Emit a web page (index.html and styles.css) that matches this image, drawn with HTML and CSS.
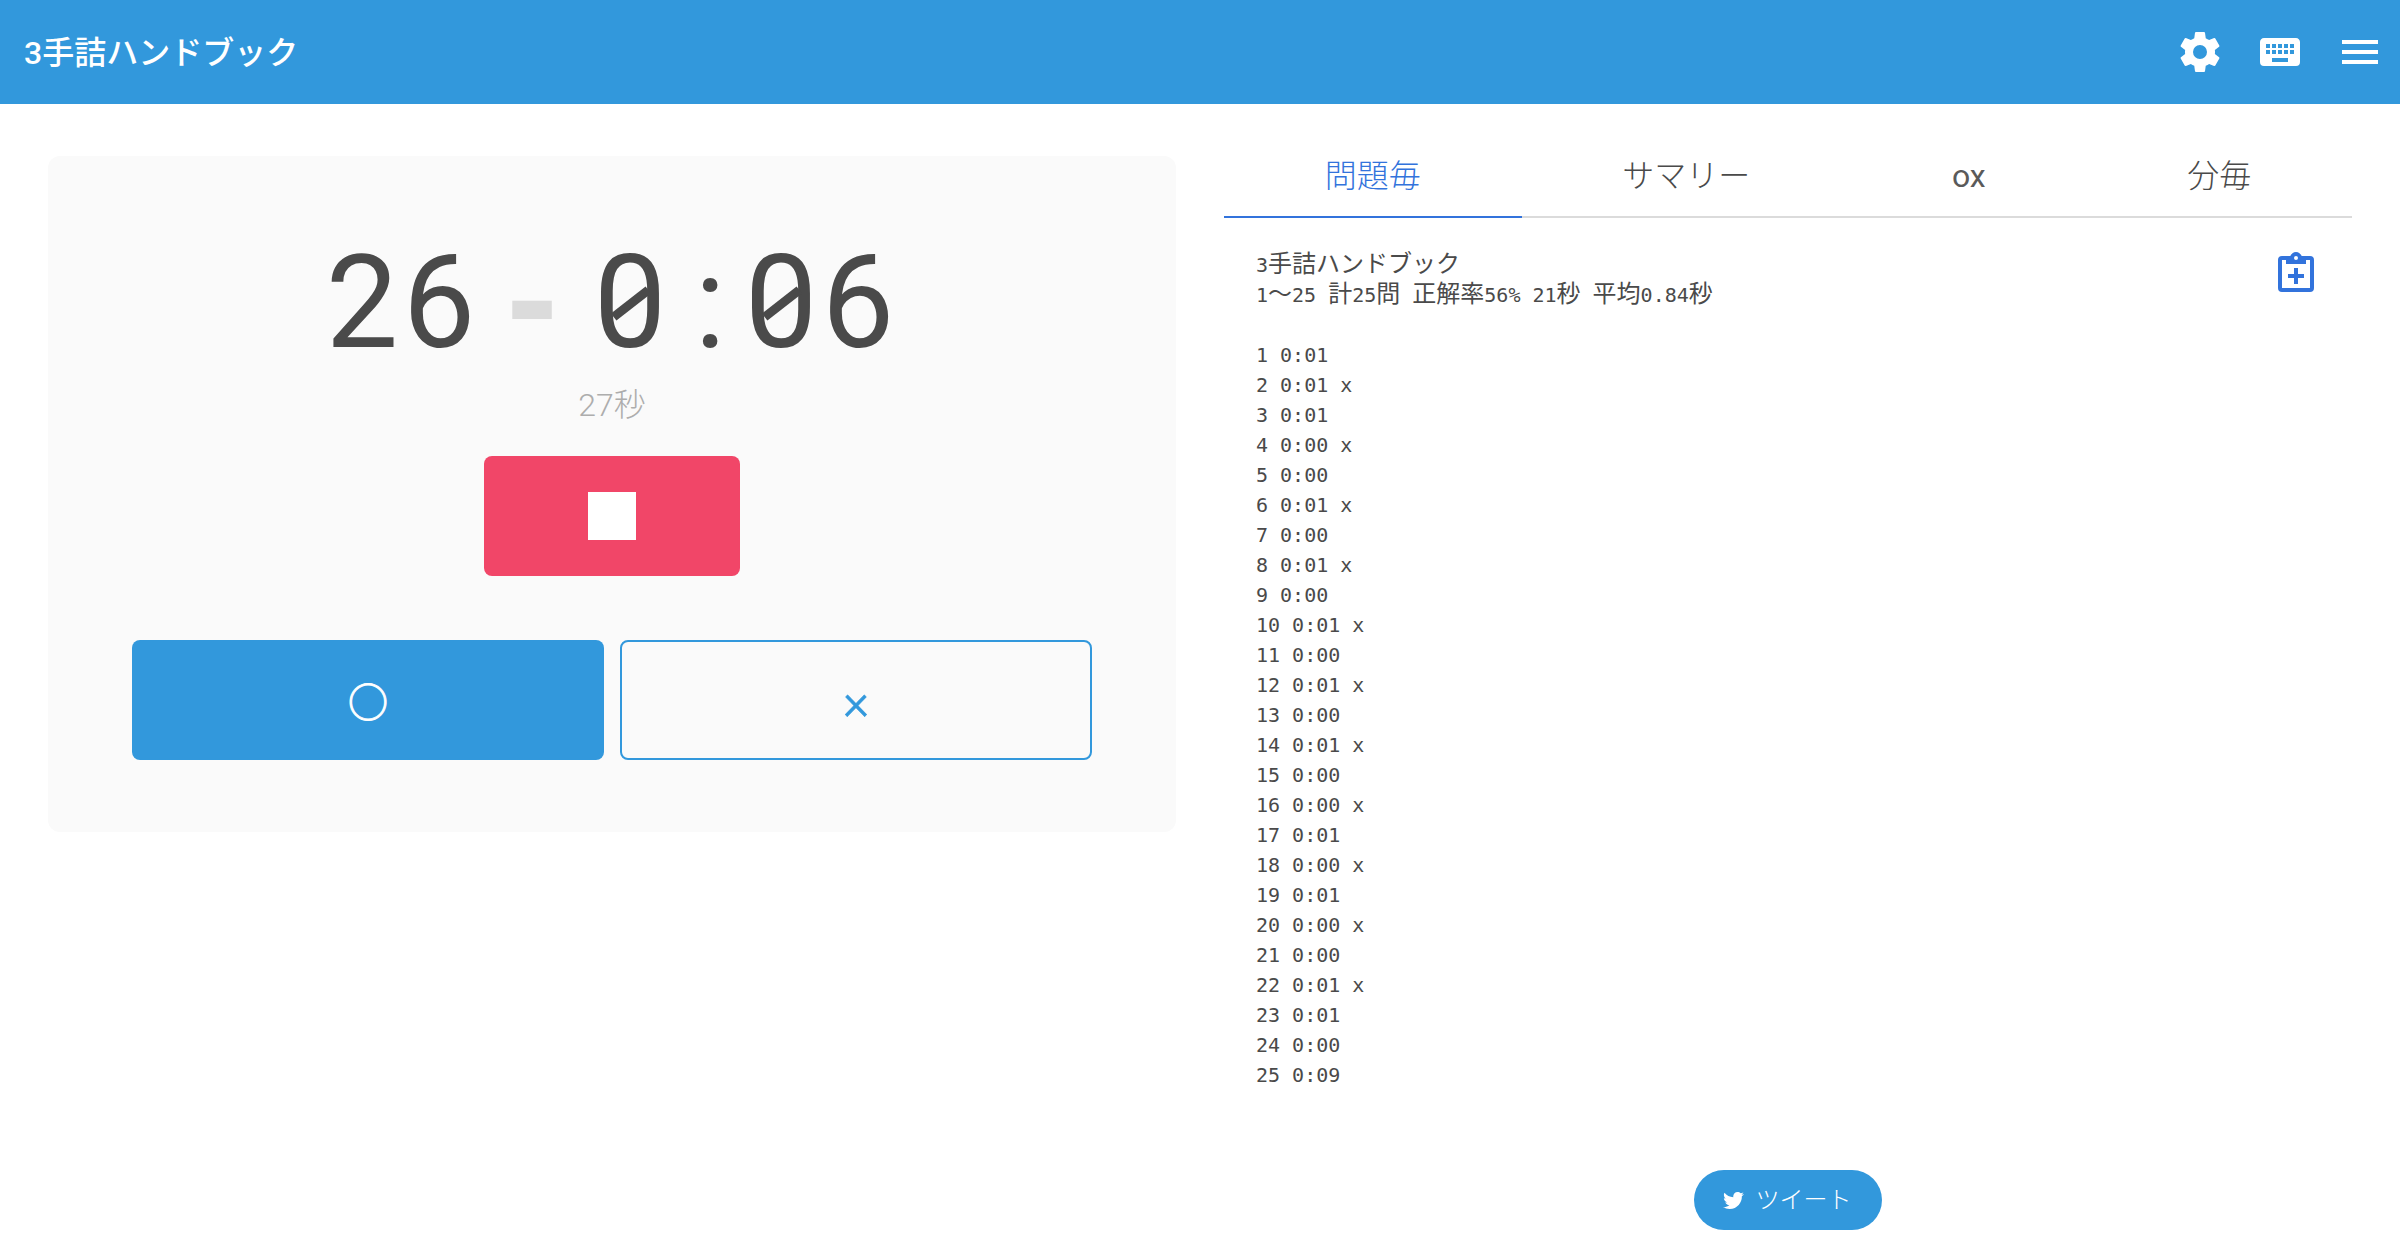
FILE: index.html
```html
<!DOCTYPE html>
<html>
<head>
  <meta charset="utf-8">
  <link rel="stylesheet" href="styles.css">
  <title>3手詰ハンドブック</title>
</head>
<body>
  <header class="navbar">
    <div class="navbar-title">3手詰ハンドブック</div>
    <div class="navbar-icons">
      <a class="navbar-icon"><svg class="icon" viewBox="0 0 24 24"><path d="M12,15.5A3.5,3.5 0 0,1 8.5,12A3.5,3.5 0 0,1 12,8.5A3.5,3.5 0 0,1 15.5,12A3.5,3.5 0 0,1 12,15.5M19.43,12.97C19.47,12.65 19.5,12.33 19.5,12C19.5,11.67 19.47,11.34 19.43,11L21.54,9.37C21.73,9.22 21.78,8.95 21.66,8.73L19.66,5.27C19.54,5.05 19.27,4.96 19.05,5.05L16.56,6.05C16.04,5.66 15.5,5.32 14.87,5.07L14.5,2.42C14.46,2.18 14.25,2 14,2H10C9.75,2 9.54,2.18 9.5,2.42L9.13,5.07C8.5,5.32 7.96,5.66 7.44,6.05L4.95,5.05C4.73,4.96 4.46,5.05 4.34,5.27L2.34,8.73C2.21,8.95 2.27,9.22 2.46,9.37L4.57,11C4.53,11.34 4.5,11.67 4.5,12C4.5,12.33 4.53,12.65 4.57,12.97L2.46,14.63C2.27,14.78 2.21,15.05 2.34,15.27L4.34,18.73C4.46,18.95 4.73,19.03 4.95,18.95L7.44,17.94C7.96,18.34 8.5,18.68 9.13,18.93L9.5,21.58C9.54,21.82 9.75,22 10,22H14C14.25,22 14.46,21.82 14.5,21.58L14.87,18.93C15.5,18.67 16.04,18.34 16.56,17.94L19.05,18.95C19.27,19.03 19.54,18.95 19.66,18.73L21.66,15.27C21.78,15.05 21.73,14.78 21.54,14.63L19.43,12.97Z"/></svg></a>
      <a class="navbar-icon"><svg class="icon" viewBox="0 0 24 24"><path d="M19,10H17V8H19M19,13H17V11H19M16,10H14V8H16M16,13H14V11H16M16,17H8V15H16M7,10H5V8H7M7,13H5V11H7M8,11H10V13H8M8,8H10V10H8M11,11H13V13H11M11,8H13V10H11M20,5H4C2.89,5 2,5.89 2,7V17A2,2 0 0,0 4,19H20A2,2 0 0,0 22,17V7C22,5.89 21.1,5 20,5Z"/></svg></a>
      <a class="navbar-icon"><svg class="icon" viewBox="0 0 24 24"><path d="M3,6H21V8H3V6M3,11H21V13H3V11M3,16H21V18H3V16Z"/></svg></a>
    </div>
  </header>

  <main class="columns">
    <section class="timer-card">
      <div class="timer"><span class="ch">2</span><span class="ch">6</span><span class="timer-dash">-</span><span class="ch zero">0</span><span class="ch timer-colon">:</span><span class="ch zero">0</span><span class="ch">6</span></div>
      <div class="timer-sub">27秒</div>
      <button class="button button-stop"><span class="stop-mark"></span></button>
      <div class="answer-row">
        <button class="button button-ok">○</button>
        <button class="button button-ng">×</button>
      </div>
    </section>

    <section class="result">
      <div class="tabs">
        <a class="tab is-active">問題毎</a>
        <a class="tab">サマリー</a>
        <a class="tab tab-latin">ox</a>
        <a class="tab">分毎</a>
      </div>
      <div class="result-body">
<pre class="log">3<span class="ja">手詰ハンドブック</span>
1<span class="ja">〜</span>25 <span class="ja">計</span>25<span class="ja">問</span> <span class="ja">正解率</span>56% 21<span class="ja">秒</span> <span class="ja">平均</span>0.84<span class="ja">秒</span>

1 0:01
2 0:01 x
3 0:01
4 0:00 x
5 0:00
6 0:01 x
7 0:00
8 0:01 x
9 0:00
10 0:01 x
11 0:00
12 0:01 x
13 0:00
14 0:01 x
15 0:00
16 0:00 x
17 0:01
18 0:00 x
19 0:01
20 0:00 x
21 0:00
22 0:01 x
23 0:01
24 0:00
25 0:09</pre>
        <a class="copy"><svg class="icon" viewBox="0 0 24 24"><path fill-rule="evenodd" d="M19,3H14.82C14.4,1.84 13.3,1 12,1C10.7,1 9.6,1.84 9.18,3H5A2,2 0 0,0 3,5V19A2,2 0 0,0 5,21H19A2,2 0 0,0 21,19V5A2,2 0 0,0 19,3M12,3A1,1 0 0,1 13,4A1,1 0 0,1 12,5A1,1 0 0,1 11,4A1,1 0 0,1 12,3M7,7H17V5H19V19H5V5H7V7M11,9H13V12H16V14H13V17H11V14H8V12H11V9Z"/></svg></a>
      </div>
      <div class="tweet-row">
        <a class="tweet"><svg class="tweet-bird" viewBox="0 0 512 512"><path d="M459.37 151.716c.325 4.548.325 9.097.325 13.645 0 138.72-105.583 298.558-298.558 298.558-59.452 0-114.68-17.219-161.137-47.106 8.447.974 16.568 1.299 25.34 1.299 49.055 0 94.213-16.568 130.274-44.832-46.132-.975-84.792-31.188-98.112-72.772 6.498.974 12.995 1.624 19.818 1.624 9.421 0 18.843-1.3 27.614-3.573-48.081-9.747-84.143-51.98-84.143-102.985v-1.299c13.969 7.797 30.214 12.67 47.431 13.319-28.264-18.843-46.781-51.005-46.781-87.391 0-19.492 5.197-37.36 14.294-52.954 51.655 63.675 129.3 105.258 216.365 109.807-1.624-7.797-2.599-15.918-2.599-24.04 0-57.828 46.782-104.934 104.934-104.934 30.213 0 57.502 12.67 76.67 33.137 23.715-4.548 46.456-13.32 66.599-25.34-7.798 24.366-24.366 44.833-46.132 57.827 21.117-2.273 41.584-8.122 60.426-16.243-14.292 20.791-32.161 39.308-52.628 54.253z"/></svg><span class="tweet-label">ツイート</span></a>
      </div>
    </section>
  </main>
</body>
</html>
```

FILE: styles.css
```css
html, body { margin: 0; padding: 0; }
body {
  color: #4a4a4a;
  background: #fff;
  font-family: Roboto, "Noto Sans CJK JP", sans-serif;
  font-size: 32px;
}

.navbar {
  display: flex;
  align-items: center;
  justify-content: space-between;
  height: 104px;
  padding-left: 24px;
  background: #3298dc;
  color: #fff;
}
.navbar-title { padding-bottom: 4px; font-size: 32px; font-weight: 500; }
.navbar-icons { display: flex; }
.navbar-icon { display: flex; padding: 16px; }
.navbar-icon .icon { fill: #fff; }

.icon { display: block; width: 48px; height: 48px; }

.columns {
  display: flex;
  gap: 48px;
  padding: 52px 48px 0;
}

.timer-card {
  flex: 0 0 1128px;
  box-sizing: border-box;
  height: 676px;
  padding-top: 72px;
  background: #fafafa;
  border-radius: 12px;
  text-align: center;
}
.timer {
  display: flex;
  align-items: baseline;
  justify-content: center;
  height: 150px;
  padding-right: 4px;
  font-family: Roboto, sans-serif;
  font-size: 129px;
  line-height: 150px;
}
.ch { position: relative; width: 77px; text-align: center; }
/* slashed zero, the installed fonts have none */
.zero::after {
  content: "";
  position: absolute;
  left: 17px;
  top: 71px;
  width: 44px;
  height: 9px;
  background: #4a4a4a;
  transform: rotate(-38deg);
}
.timer-dash {
  width: 109px;
  margin-right: 5px;
  color: #dbdbdb;
  font-family: "DejaVu Sans Mono", monospace;
  font-size: 128px;
  font-weight: bold;
}
.timer-colon { margin: 0 -6px 0 3px; }
.timer-sub {
  margin-top: 3px;
  color: #adadad;
  font-size: 32px;
  font-weight: 300;
  line-height: 48px;
}

.button {
  display: flex;
  align-items: center;
  justify-content: center;
  box-sizing: border-box;
  height: 120px;
  padding: 0;
  border: 0;
  border-radius: 8px;
  font-family: Roboto, "Noto Sans CJK JP", sans-serif;
  font-size: 40px;
}
.button-stop {
  width: 256px;
  margin: 27px auto 0;
  background: #f14668;
}
.stop-mark { width: 48px; height: 48px; background: #fff; }

.answer-row {
  display: grid;
  grid-template-columns: 1fr 1fr;
  gap: 16px;
  margin-top: 64px;
  padding: 0 84px;
}
.button-ok {
  background: #3298dc;
  color: #fff;
  -webkit-text-stroke: 1px #fff;
}
.button-ng {
  padding-top: 3px;
  background: transparent;
  color: #3298dc;
  border: 2px solid #3298dc;
  font-size: 50px;
  font-weight: 300;
  -webkit-text-stroke: 0.6px #3298dc;
}

.result { flex: 0 0 1128px; }

.tabs {
  display: flex;
  box-sizing: border-box;
  height: 62px;
  border-bottom: 2px solid #dbdbdb;
}
.tab {
  flex: 1 1 auto;
  box-sizing: border-box;
  height: 62px;
  padding: 0 8px;
  text-align: center;
  line-height: 41px;
  font-weight: 300;
}
.tab-latin { font-weight: 400; color: #5a5a5a; }
.tab.is-active {
  color: #3273dc;
  border-bottom: 2px solid #3273dc;
}

.result-body {
  display: flex;
  justify-content: space-between;
  padding: 32px 32px 0 32px;
}
.log {
  margin: 0;
  font-family: "DejaVu Sans Mono", monospace;
  font-size: 20px;
  line-height: 30px;
}
.ja {
  display: inline-block;
  font-family: "Noto Sans CJK JP", sans-serif;
  font-size: 24px;
  line-height: 23px;
}
.copy { margin-top: 0; }
.copy .icon { fill: #3273dc; }

.tweet-row { display: flex; justify-content: center; margin-top: 80px; }
.tweet {
  display: flex;
  align-items: center;
  justify-content: center;
  gap: 12px;
  width: 186px;
  height: 60px;
  padding-right: 2px;
  border-radius: 30px;
  background: #3298dc;
  color: #fff;
  font-family: "Noto Sans CJK JP", sans-serif;
  font-size: 24px;
  font-weight: 300;
}
.tweet-label { margin-top: -5px; }
.tweet-bird { width: 21px; height: 21px; fill: #fff; }
```
